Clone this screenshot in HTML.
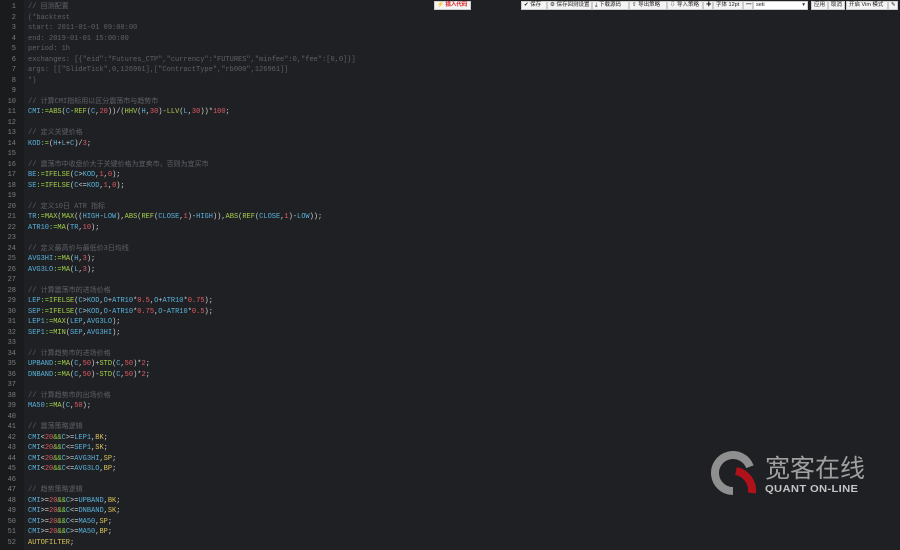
<!DOCTYPE html>
<html><head><meta charset="utf-8"><style>
*{margin:0;padding:0;box-sizing:border-box}
body{width:900px;height:550px;overflow:hidden;background:#1f2023;font-family:"Liberation Mono","Noto Sans CJK SC",monospace;position:relative}
.gut{position:absolute;left:0;top:0;width:24px;height:550px;background:#1a1b1d}
.code{position:absolute;left:0;top:2px;font-size:7px;line-height:10.5px;white-space:pre;color:#c8c8c8}
.ln{display:inline-block;width:16px;text-align:right;color:#7a7d82;margin-right:12px}
.c{color:#5c6168}.v{color:#58b2dc}.o{color:#8fcf4a}.n{color:#e05a64}.f{color:#a4d04a}.k{color:#d9c25a}.p{color:#d0d0d0}
.tb{position:absolute;top:1px;height:9px;background:#f4f4f4;border:1px solid #ccc;font-family:"Liberation Sans","Noto Sans CJK SC",sans-serif;font-size:5.5px;line-height:7px;color:#222;padding:0 2px;white-space:nowrap}
.logo{position:absolute;left:710px;top:450px}
</style></head><body>
<div class="gut"></div>
<div class="code"><span class="ln">1</span><span class="c">// 回测配置</span>
<span class="ln">2</span><span class="c">(*backtest</span>
<span class="ln">3</span><span class="c">start: 2011-01-01 09:00:00</span>
<span class="ln">4</span><span class="c">end: 2019-01-01 15:00:00</span>
<span class="ln">5</span><span class="c">period: 1h</span>
<span class="ln">6</span><span class="c">exchanges: [{"eid":"Futures_CTP","currency":"FUTURES","minfee":0,"fee":[0,0]}]</span>
<span class="ln">7</span><span class="c">args: [["SlideTick",0,126961],["ContractType","rb000",126961]]</span>
<span class="ln">8</span><span class="c">*)</span>
<span class="ln">9</span>
<span class="ln">10</span><span class="c">// 计算CMI指标用以区分震荡市与趋势市</span>
<span class="ln">11</span><span class="v">CMI</span><span class="o">:=</span><span class="f">ABS</span><span class="p">(</span><span class="v">C</span><span class="p">-</span><span class="f">REF</span><span class="p">(</span><span class="v">C</span><span class="p">,</span><span class="n">20</span><span class="p">))/(</span><span class="f">HHV</span><span class="p">(</span><span class="v">H</span><span class="p">,</span><span class="n">30</span><span class="p">)-</span><span class="f">LLV</span><span class="p">(</span><span class="v">L</span><span class="p">,</span><span class="n">30</span><span class="p">))*</span><span class="n">100</span><span class="p">;</span>
<span class="ln">12</span>
<span class="ln">13</span><span class="c">// 定义关键价格</span>
<span class="ln">14</span><span class="v">KOD</span><span class="o">:=</span><span class="p">(</span><span class="v">H</span><span class="p">+</span><span class="v">L</span><span class="p">+</span><span class="v">C</span><span class="p">)/</span><span class="n">3</span><span class="p">;</span>
<span class="ln">15</span>
<span class="ln">16</span><span class="c">// 震荡市中收盘价大于关键价格为宜卖市，否则为宜买市</span>
<span class="ln">17</span><span class="v">BE</span><span class="o">:=</span><span class="f">IFELSE</span><span class="p">(</span><span class="v">C</span><span class="p">&gt;</span><span class="v">KOD</span><span class="p">,</span><span class="n">1</span><span class="p">,</span><span class="n">0</span><span class="p">);</span>
<span class="ln">18</span><span class="v">SE</span><span class="o">:=</span><span class="f">IFELSE</span><span class="p">(</span><span class="v">C</span><span class="p">&lt;=</span><span class="v">KOD</span><span class="p">,</span><span class="n">1</span><span class="p">,</span><span class="n">0</span><span class="p">);</span>
<span class="ln">19</span>
<span class="ln">20</span><span class="c">// 定义10日 ATR 指标</span>
<span class="ln">21</span><span class="v">TR</span><span class="o">:=</span><span class="f">MAX</span><span class="p">(</span><span class="f">MAX</span><span class="p">((</span><span class="v">HIGH</span><span class="p">-</span><span class="v">LOW</span><span class="p">),</span><span class="f">ABS</span><span class="p">(</span><span class="f">REF</span><span class="p">(</span><span class="v">CLOSE</span><span class="p">,</span><span class="n">1</span><span class="p">)-</span><span class="v">HIGH</span><span class="p">)),</span><span class="f">ABS</span><span class="p">(</span><span class="f">REF</span><span class="p">(</span><span class="v">CLOSE</span><span class="p">,</span><span class="n">1</span><span class="p">)-</span><span class="v">LOW</span><span class="p">));</span>
<span class="ln">22</span><span class="v">ATR10</span><span class="o">:=</span><span class="f">MA</span><span class="p">(</span><span class="v">TR</span><span class="p">,</span><span class="n">10</span><span class="p">);</span>
<span class="ln">23</span>
<span class="ln">24</span><span class="c">// 定义最高价与最低价3日均线</span>
<span class="ln">25</span><span class="v">AVG3HI</span><span class="o">:=</span><span class="f">MA</span><span class="p">(</span><span class="v">H</span><span class="p">,</span><span class="n">3</span><span class="p">);</span>
<span class="ln">26</span><span class="v">AVG3LO</span><span class="o">:=</span><span class="f">MA</span><span class="p">(</span><span class="v">L</span><span class="p">,</span><span class="n">3</span><span class="p">);</span>
<span class="ln">27</span>
<span class="ln">28</span><span class="c">// 计算震荡市的进场价格</span>
<span class="ln">29</span><span class="v">LEP</span><span class="o">:=</span><span class="f">IFELSE</span><span class="p">(</span><span class="v">C</span><span class="p">&gt;</span><span class="v">KOD</span><span class="p">,</span><span class="v">O</span><span class="p">+</span><span class="v">ATR10</span><span class="p">*</span><span class="n">0.5</span><span class="p">,</span><span class="v">O</span><span class="p">+</span><span class="v">ATR10</span><span class="p">*</span><span class="n">0.75</span><span class="p">);</span>
<span class="ln">30</span><span class="v">SEP</span><span class="o">:=</span><span class="f">IFELSE</span><span class="p">(</span><span class="v">C</span><span class="p">&gt;</span><span class="v">KOD</span><span class="p">,</span><span class="v">O</span><span class="p">-</span><span class="v">ATR10</span><span class="p">*</span><span class="n">0.75</span><span class="p">,</span><span class="v">O</span><span class="p">-</span><span class="v">ATR10</span><span class="p">*</span><span class="n">0.5</span><span class="p">);</span>
<span class="ln">31</span><span class="v">LEP1</span><span class="o">:=</span><span class="f">MAX</span><span class="p">(</span><span class="v">LEP</span><span class="p">,</span><span class="v">AVG3LO</span><span class="p">);</span>
<span class="ln">32</span><span class="v">SEP1</span><span class="o">:=</span><span class="f">MIN</span><span class="p">(</span><span class="v">SEP</span><span class="p">,</span><span class="v">AVG3HI</span><span class="p">);</span>
<span class="ln">33</span>
<span class="ln">34</span><span class="c">// 计算趋势市的进场价格</span>
<span class="ln">35</span><span class="v">UPBAND</span><span class="o">:=</span><span class="f">MA</span><span class="p">(</span><span class="v">C</span><span class="p">,</span><span class="n">50</span><span class="p">)+</span><span class="f">STD</span><span class="p">(</span><span class="v">C</span><span class="p">,</span><span class="n">50</span><span class="p">)*</span><span class="n">2</span><span class="p">;</span>
<span class="ln">36</span><span class="v">DNBAND</span><span class="o">:=</span><span class="f">MA</span><span class="p">(</span><span class="v">C</span><span class="p">,</span><span class="n">50</span><span class="p">)-</span><span class="f">STD</span><span class="p">(</span><span class="v">C</span><span class="p">,</span><span class="n">50</span><span class="p">)*</span><span class="n">2</span><span class="p">;</span>
<span class="ln">37</span>
<span class="ln">38</span><span class="c">// 计算趋势市的出场价格</span>
<span class="ln">39</span><span class="v">MA50</span><span class="o">:=</span><span class="f">MA</span><span class="p">(</span><span class="v">C</span><span class="p">,</span><span class="n">50</span><span class="p">);</span>
<span class="ln">40</span>
<span class="ln">41</span><span class="c">// 震荡策略逻辑</span>
<span class="ln">42</span><span class="v">CMI</span><span class="p">&lt;</span><span class="n">20</span><span class="o">&amp;&amp;</span><span class="v">C</span><span class="p">&gt;=</span><span class="v">LEP1</span><span class="p">,</span><span class="k">BK</span><span class="p">;</span>
<span class="ln">43</span><span class="v">CMI</span><span class="p">&lt;</span><span class="n">20</span><span class="o">&amp;&amp;</span><span class="v">C</span><span class="p">&lt;=</span><span class="v">SEP1</span><span class="p">,</span><span class="k">SK</span><span class="p">;</span>
<span class="ln">44</span><span class="v">CMI</span><span class="p">&lt;</span><span class="n">20</span><span class="o">&amp;&amp;</span><span class="v">C</span><span class="p">&gt;=</span><span class="v">AVG3HI</span><span class="p">,</span><span class="k">SP</span><span class="p">;</span>
<span class="ln">45</span><span class="v">CMI</span><span class="p">&lt;</span><span class="n">20</span><span class="o">&amp;&amp;</span><span class="v">C</span><span class="p">&lt;=</span><span class="v">AVG3LO</span><span class="p">,</span><span class="k">BP</span><span class="p">;</span>
<span class="ln">46</span>
<span class="ln">47</span><span class="c">// 趋势策略逻辑</span>
<span class="ln">48</span><span class="v">CMI</span><span class="p">&gt;=</span><span class="n">20</span><span class="o">&amp;&amp;</span><span class="v">C</span><span class="p">&gt;=</span><span class="v">UPBAND</span><span class="p">,</span><span class="k">BK</span><span class="p">;</span>
<span class="ln">49</span><span class="v">CMI</span><span class="p">&gt;=</span><span class="n">20</span><span class="o">&amp;&amp;</span><span class="v">C</span><span class="p">&lt;=</span><span class="v">DNBAND</span><span class="p">,</span><span class="k">SK</span><span class="p">;</span>
<span class="ln">50</span><span class="v">CMI</span><span class="p">&gt;=</span><span class="n">20</span><span class="o">&amp;&amp;</span><span class="v">C</span><span class="p">&lt;=</span><span class="v">MA50</span><span class="p">,</span><span class="k">SP</span><span class="p">;</span>
<span class="ln">51</span><span class="v">CMI</span><span class="p">&gt;=</span><span class="n">20</span><span class="o">&amp;&amp;</span><span class="v">C</span><span class="p">&gt;=</span><span class="v">MA50</span><span class="p">,</span><span class="k">BP</span><span class="p">;</span>
<span class="ln">52</span><span class="k">AUTOFILTER</span><span class="p">;</span></div>

<div class="tb" style="left:434px;width:37px;color:#d22;font-weight:bold">⚡ 插入代码</div>
<div class="tb" style="left:521px;width:26px">✔ 保存</div>
<div class="tb" style="left:547px;width:45px">⚙ 保存回测设置</div>
<div class="tb" style="left:592px;width:37px">⤓ 下载源码</div>
<div class="tb" style="left:629px;width:38px">⇪ 导出策略</div>
<div class="tb" style="left:667px;width:36px">⇩ 导入策略</div>
<div class="tb" style="left:703px;width:10px;font-weight:bold">✚</div>
<div class="tb" style="left:713px;width:30px">字体 12pt</div>
<div class="tb" style="left:743px;width:10px;font-weight:bold">━</div>
<div class="tb" style="left:753px;width:55px;background:#fff">seti<span style="float:right">▾</span></div>
<div class="tb" style="left:811px;width:17px">应用</div>
<div class="tb" style="left:828px;width:17px">取消</div>
<div class="tb" style="left:846px;width:42px">开启 Vim 模式</div>
<div class="tb" style="left:888px;width:10px">✎</div>

<div class="logo">
<svg width="55" height="50" viewBox="0 0 55 50" style="position:absolute;left:0;top:0">
<path d="M39.9 16.8 A18 18 0 1 0 23 41" fill="none" stroke="#8f8f8f" stroke-width="8"/>
<path d="M26 21 A20 20 0 0 1 42 43" fill="none" stroke="#b0121c" stroke-width="8"/>
</svg>
<div style="position:absolute;left:55px;top:2px;font-family:'Noto Sans CJK SC',sans-serif;font-size:25px;line-height:30px;color:#a0a0a0;white-space:nowrap">宽客在线</div>
<div style="position:absolute;left:55px;top:35px;font-family:'Liberation Sans',sans-serif;font-weight:bold;font-size:10px;line-height:10px;color:#c4c4c4;white-space:nowrap;letter-spacing:0.3px;transform:scaleX(1.12);transform-origin:left">QUANT ON-LINE</div>
</div>
</body></html>
